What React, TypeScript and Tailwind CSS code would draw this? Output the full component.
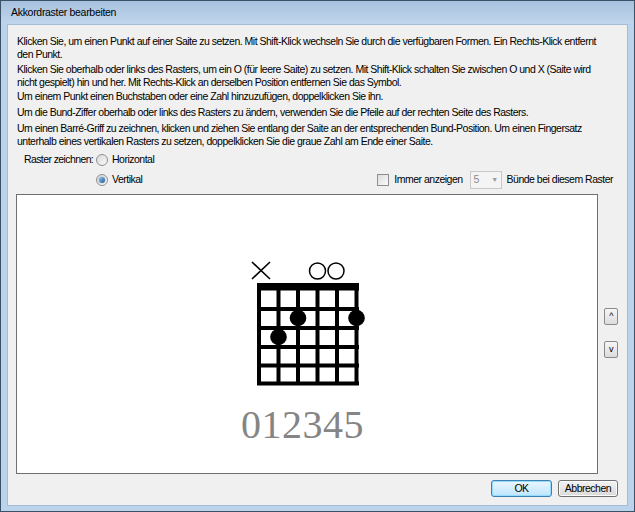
const font = { fontFamily: '"Liberation Sans", Arial, sans-serif' };

const Radio = ({ checked }: { checked?: boolean }) => (
  <span className="relative inline-flex h-[12px] w-[12px] shrink-0 items-center justify-center rounded-full border border-[#8e8f8f] bg-gradient-to-br from-[#d8d8d8] to-[#fbfbfb]">
    {checked && (
      <span className="h-[6px] w-[6px] rounded-full bg-gradient-to-br from-[#8fc3ef] to-[#1d5c99] shadow-[0_0_1px_#1b5287]" />
    )}
  </span>
);

const ChordDiagram = () => {
  const strings = [260, 279.5, 299, 318.5, 338, 357.5];
  const frets = [307, 326, 345, 363.5, 381.5];
  const ox = 245;
  const oy = 255;
  return (
    <svg width="126" height="130" viewBox="0 0 126 130">
      {/* X over first string */}
      <path d={`M${253 - ox} ${260 - oy} L${271 - ox} ${277 - oy} M${271 - ox} ${260 - oy} L${253 - ox} ${277 - oy}`} stroke="#000" strokeWidth="1.6" fill="none" />
      {/* open strings */}
      <circle cx={318.5 - ox} cy={269 - oy} r="8" stroke="#000" strokeWidth="1.5" fill="none" />
      <circle cx={337 - ox} cy={269 - oy} r="8" stroke="#000" strokeWidth="1.5" fill="none" />
      {/* nut */}
      <rect x={258 - ox} y={281 - oy} width={102} height={7.5} fill="#000" />
      {strings.map((x) => (
        <rect key={x} x={x - 2 - ox} y={281 - oy} width={4} height={102} fill="#000" />
      ))}
      {frets.map((y) => (
        <rect key={y} x={258 - ox} y={y - 2 - oy} width={102} height={4} fill="#000" />
      ))}
      {/* finger dots */}
      <circle cx={299 - ox} cy={316 - oy} r="8.3" fill="#000" />
      <circle cx={357.5 - ox} cy={316 - oy} r="8.3" fill="#000" />
      <circle cx={279.5 - ox} cy={335 - oy} r="8.3" fill="#000" />
    </svg>
  );
};

export default function App() {
  return (
    <div className="flex h-[512px] w-[635px] flex-col overflow-hidden border border-[#3b5266] bg-[#bcd3ec] text-[10.5px] tracking-[-0.5px] text-black whitespace-nowrap" style={font}>
      <div className="flex h-[23px] shrink-0 items-center bg-gradient-to-b from-[#a7c1de] to-[#c0d5ec] pl-[10px] pt-[1px] tracking-[-0.3px]">
        Akkordraster bearbeiten
      </div>
      <div className="mx-[6px] mb-[5px] flex flex-1 flex-col border border-[#a5bcd6] bg-[#f0f0f0]">
        <div className="px-[9px] pt-[10px] leading-[13px]">
          <p className="mb-[2px]">
            Klicken Sie, um einen Punkt auf einer Saite zu setzen. Mit Shift-Klick wechseln Sie durch die verfügbaren Formen. Ein Rechts-Klick entfernt
            <br />
            den Punkt.
          </p>
          <p className="mb-[1px]">
            Klicken Sie oberhalb oder links des Rasters, um ein O (für leere Saite) zu setzen. Mit Shift-Klick schalten Sie zwischen O und X (Saite wird
            <br />
            nicht gespielt) hin und her. Mit Rechts-Klick an derselben Position entfernen Sie das Symbol.
          </p>
          <p className="mb-[3px]">Um einem Punkt einen Buchstaben oder eine Zahl hinzuzufügen, doppelklicken Sie ihn.</p>
          <p className="mb-[3px]">Um die Bund-Ziffer oberhalb oder links des Rasters zu ändern, verwenden Sie die Pfeile auf der rechten Seite des Rasters.</p>
          <p>
            Um einen Barré-Griff zu zeichnen, klicken und ziehen Sie entlang der Saite an der entsprechenden Bund-Position. Um einen Fingersatz
            <br />
            unterhalb eines vertikalen Rasters zu setzen, doppelklicken Sie die graue Zahl am Ende einer Saite.
          </p>
        </div>

        <div className="mt-[2px] flex h-[20px] items-center">
          <span className="w-[88px] pl-[16px] tracking-[-0.6px]">Raster zeichnen:</span>
          <Radio />
          <span className="ml-[4px]">Horizontal</span>
        </div>
        <div className="flex h-[20px] items-center pr-[14px]">
          <span className="w-[88px]" />
          <Radio checked />
          <span className="ml-[4px]">Vertikal</span>
          <span className="ml-auto inline-block h-[12px] w-[12px] border border-[#8e8f8f] bg-gradient-to-br from-[#dcdcdc] to-[#fbfbfb]" />
          <span className="ml-[5px]">Immer anzeigen</span>
          <span className="ml-[7px] flex h-[18px] w-[32px] items-center justify-between border border-[#c9c9c9] bg-[#f4f4f4] px-[3px] text-[#8d8d8d]">
            <span>5</span>
            <span className="text-[7px] text-[#9a9a9a]">▼</span>
          </span>
          <span className="ml-[5px]">Bünde bei diesem Raster</span>
        </div>

        <div className="mt-[4px] flex">
          <div className="ml-[8px] h-[280px] w-[582px] border border-[#6f6f6f] bg-white">
            <div className="ml-[227px] pt-[62px]">
              <ChordDiagram />
            </div>
            <div
              className="ml-[224px] mt-[18px] text-[40px] leading-[40px] tracking-[0.5px] text-[#858585]"
              style={{ fontFamily: '"Liberation Serif", "Times New Roman", serif' }}
            >
              012345
            </div>
          </div>
          <div className="ml-[6px] flex flex-col pt-[114px]">
            <button className="flex h-[17px] w-[14px] items-center justify-center rounded-[2px] border border-[#8a8a8a] bg-gradient-to-b from-[#f6f6f6] to-[#dcdcdc] text-[9px] leading-none">
              ^
            </button>
            <button className="mt-[16px] flex h-[17px] w-[14px] items-center justify-center rounded-[2px] border border-[#8a8a8a] bg-gradient-to-b from-[#f6f6f6] to-[#dcdcdc] text-[9px] leading-none">
              v
            </button>
          </div>
        </div>

        <div className="mt-[6px] flex justify-end pr-[9px]">
          <button className="flex h-[17px] w-[61px] items-center justify-center rounded-[3px] border border-[#3c7fb1] bg-gradient-to-b from-[#eaf6fd] to-[#bee6fd] shadow-[inset_0_0_0_1px_#94dbff]">
            OK
          </button>
          <button className="ml-[6px] flex h-[17px] w-[60px] items-center justify-center rounded-[3px] border border-[#707070] bg-gradient-to-b from-[#f2f2f2] to-[#dadada] shadow-[inset_0_0_0_1px_#fcfcfc]">
            Abbrechen
          </button>
        </div>
      </div>
    </div>
  );
}
